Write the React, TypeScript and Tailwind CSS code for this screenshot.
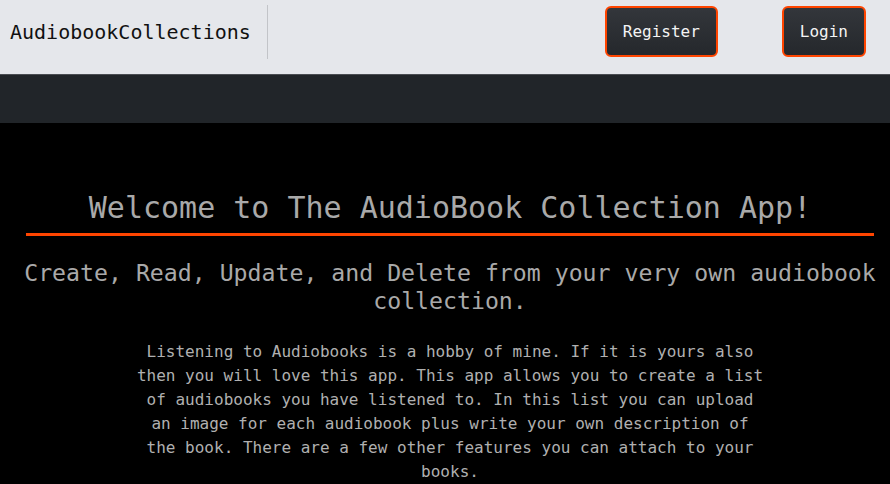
const mono = "font-['DejaVu_Sans_Mono',_'Liberation_Mono',_monospace]";

const NavButton = ({ label }: { label: string }) => (
  <button className="h-[51px] px-[16px] rounded-[6px] border-2 border-[#ff4500] bg-gradient-to-b from-[#33363b] to-[#25282c] text-[16px] text-[#f4f4f4]">
    {label}
  </button>
);

const App = () => {
  return (
    <div className={`${mono} min-h-[484px] bg-black`}>
      <nav className="h-[75px] bg-[#e5e7eb] border-b border-[#4a4d52] flex items-start pt-[5px]">
        <span className="pl-[10px] h-[54px] flex items-center text-[20px] text-[#111]">
          AudiobookCollections
        </span>
        <div className="ml-[16px] h-[54px] w-px bg-[#c2c4c8]" />
        <div className="ml-auto mr-[24px] mt-[1px] flex items-center gap-[64px]">
          <NavButton label="Register" />
          <NavButton label="Login" />
        </div>
      </nav>

      <div className="h-[48px] bg-[#212529]" />

      <main className="pl-[10px] pt-[67px] pb-10 text-center text-[#a9a9a9]">
        <h1 className="text-[30px] leading-[36px]">Welcome to The AudioBook Collection App!</h1>
        <hr className="mx-[16px] mt-[7px] border-0 h-[3px] bg-[#ff4500]" />
        <h2 className="mt-[23px] px-[4px] text-[23.2px] leading-[28px]">
          Create, Read, Update, and Delete from your very own audiobook collection.
        </h2>
        <p className="mx-auto mt-[25px] w-[632px] text-[16px] leading-[24px] text-[#b0b0b0]">
          Listening to Audiobooks is a hobby of mine. If it is yours also then you will love
          this app. This app allows you to create a list of audiobooks you have listened to.
          In this list you can upload an image for each audiobook plus write your own
          description of the book. There are a few other features you can attach to your
          books.
        </p>
      </main>
    </div>
  );
};

export default App;
